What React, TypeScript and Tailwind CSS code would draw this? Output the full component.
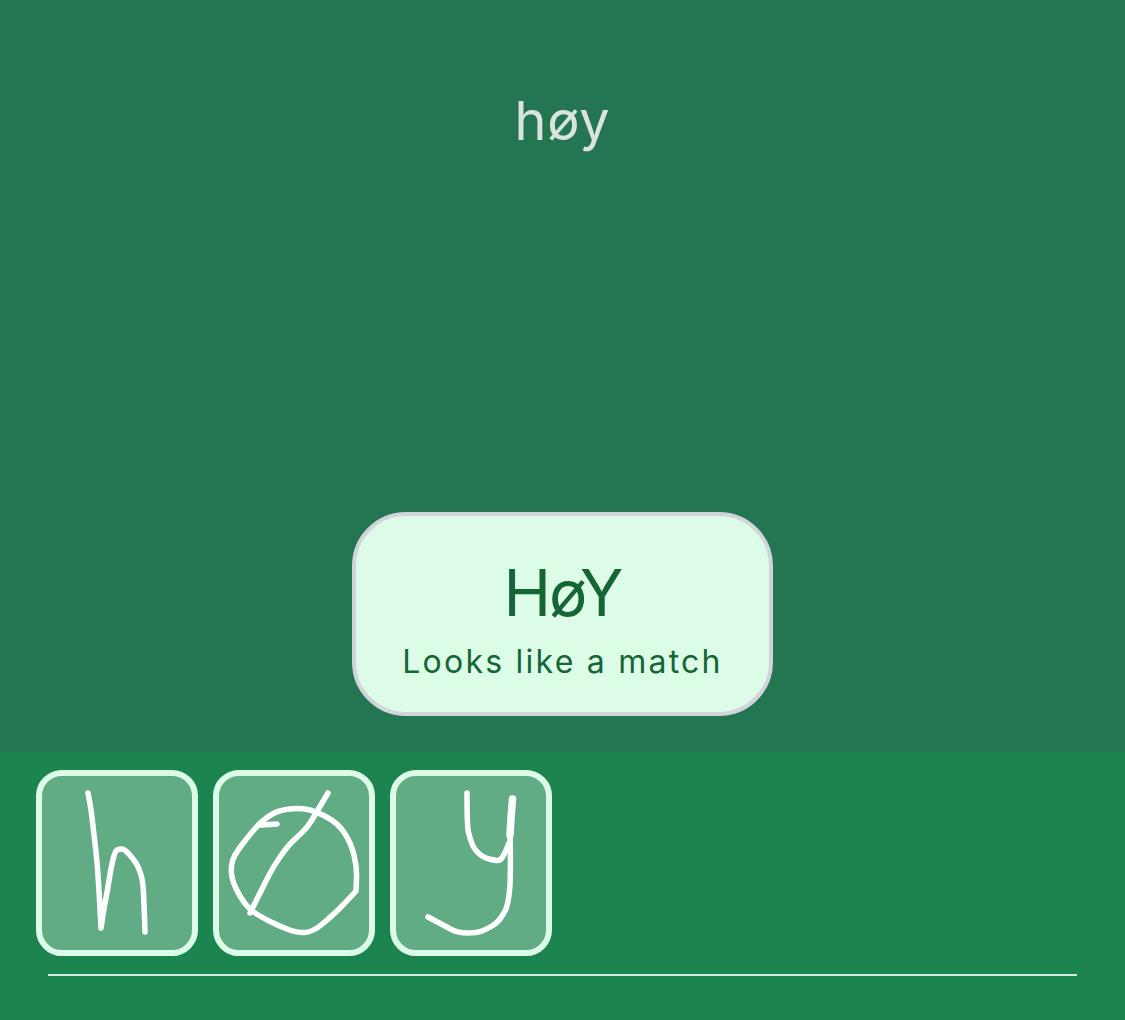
type Pt = [number, number];

function smooth(points: Pt[]): string {
  let d = `M${points[0][0]} ${points[0][1]}`;
  for (let i = 1; i < points.length - 1; i++) {
    const [x, y] = points[i];
    const [nx, ny] = points[i + 1];
    d += ` Q${x} ${y} ${(x + nx) / 2} ${(y + ny) / 2}`;
  }
  const last = points[points.length - 1];
  return `${d} L${last[0]} ${last[1]}`;
}

const H: Pt[] = [[88, 793], [90, 803], [92, 817], [94, 835], [97, 860], [99, 890], [101, 928], [101, 928], [104, 908], [107, 893], [111, 868], [115, 851], [119, 849], [124, 849], [130, 855], [137, 864], [141, 874], [143, 884], [144, 903], [145, 932]];
const O: Pt[] = [[277, 824], [262, 825], [258, 825], [247, 838], [238, 850], [232, 860], [231, 872], [233, 882], [240, 897], [250, 910], [263, 918], [277, 925], [297, 933], [313, 932], [333, 915], [346, 902], [356, 891], [356, 891], [357, 867], [351, 843], [338, 823], [315, 811], [300, 808], [280, 810], [267, 817], [258, 825]];
const SLASH: Pt[] = [[328, 793], [315, 815], [307, 828], [296, 838], [287, 847], [273, 867], [262, 889], [250, 913]];
const Y1: Pt[] = [[467, 793], [467, 827], [470, 838], [473, 847], [479, 854], [485, 858], [493, 860], [500, 861], [505, 853], [509, 843]];
const Y2: Pt[] = [[510, 833], [511, 877], [508, 905], [503, 915], [497, 923], [487, 929], [477, 933], [458, 933], [445, 926], [428, 917]];

export default function App() {
  const stroke = {
    fill: "none",
    stroke: "#ffffff",
    strokeLinecap: "round" as const,
    strokeLinejoin: "round" as const,
    strokeWidth: 5.5,
  };
  return (
    <div className="flex h-[1020px] w-[1125px] flex-col overflow-hidden font-['Inter','Liberation_Sans',sans-serif]">
      <main className="flex h-[752px] flex-col items-center bg-[#247552]">
        <div className="mt-[88px] text-[54px] leading-[66px] font-[380] tracking-[0.015em] text-[#dbe3df]">høy</div>
        <div className="mt-[358px] flex h-[204px] w-[421px] flex-col items-center rounded-[54px] border-4 border-[#d1d5db] bg-[#dcfce7] pt-[39px] text-[#166534]">
          <div className="text-[64px] leading-[76px] font-[380] tracking-[-0.03em]">HøY</div>
          <div className="mt-[11px] text-[32px] leading-[40px] font-[380] tracking-[0.07em]">Looks like a match</div>
        </div>
      </main>
      <footer className="flex flex-1 flex-col bg-[#1c844f]">
        <div className="mt-[18px] ml-[36px] flex gap-[15px]">
          <div className="h-[186px] w-[162px] rounded-[26px] border-[6px] border-[#dcfce7] bg-[#62ac85]">
            <svg className="block h-full w-full" viewBox="42 776 150 174">
              <path {...stroke} d={smooth(H)} />
            </svg>
          </div>
          <div className="h-[186px] w-[162px] rounded-[26px] border-[6px] border-[#dcfce7] bg-[#62ac85]">
            <svg className="block h-full w-full" viewBox="219 776 150 174">
              <path {...stroke} d={smooth(O)} />
              <path {...stroke} d={smooth(SLASH)} />
            </svg>
          </div>
          <div className="h-[186px] w-[162px] rounded-[26px] border-[6px] border-[#dcfce7] bg-[#62ac85]">
            <svg className="block h-full w-full" viewBox="396 776 150 174">
              <path {...stroke} d={smooth(Y1)} />
              <path {...stroke} strokeWidth={7.5} d="M512.5 799 L511 818 L510 835" />
              <path {...stroke} d={smooth(Y2)} />
            </svg>
          </div>
        </div>
        <div className="mt-[18px] ml-[48px] h-[1.5px] w-[1029px] bg-[#cfeedd]" />
      </footer>
    </div>
  );
}
